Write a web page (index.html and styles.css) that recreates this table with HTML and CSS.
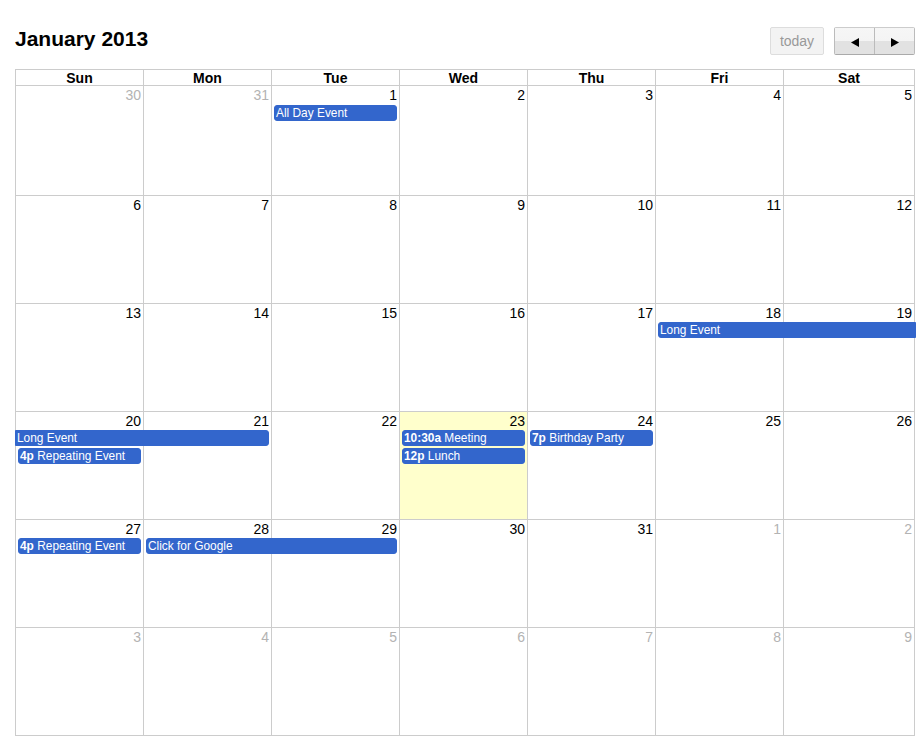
FILE: index.html
```html
<!DOCTYPE html>
<html>
<head>
<meta charset="utf-8">
<title>January 2013</title>
<link rel="stylesheet" href="styles.css">
</head>
<body>
<div class="page">
  <div class="toolbar">
    <h2 class="title">January 2013</h2>
    <div class="buttons">
      <button class="btn btn-today">today</button>
      <div class="btn-group">
        <button class="btn btn-nav"><svg class="tri" width="8" height="9" viewBox="0 0 8 9"><polygon points="8,0 8,9 0,4.5" fill="#000"/></svg></button>
        <button class="btn btn-nav btn-next"><svg class="tri" width="8" height="9" viewBox="0 0 8 9"><polygon points="0,0 0,9 8,4.5" fill="#000"/></svg></button>
      </div>
    </div>
  </div>

  <div class="calendar">
    <div class="dow-row">
      <div class="dow">Sun</div>
      <div class="dow">Mon</div>
      <div class="dow">Tue</div>
      <div class="dow">Wed</div>
      <div class="dow">Thu</div>
      <div class="dow">Fri</div>
      <div class="dow">Sat</div>
    </div>

    <div class="week week-first">
      <div class="cell other"><div class="num">30</div></div>
      <div class="cell other"><div class="num">31</div></div>
      <div class="cell"><div class="num">1</div></div>
      <div class="cell"><div class="num">2</div></div>
      <div class="cell"><div class="num">3</div></div>
      <div class="cell"><div class="num">4</div></div>
      <div class="cell"><div class="num">5</div></div>
      <div class="event col-3 row-2">All Day Event</div>
    </div>

    <div class="week">
      <div class="cell"><div class="num">6</div></div>
      <div class="cell"><div class="num">7</div></div>
      <div class="cell"><div class="num">8</div></div>
      <div class="cell"><div class="num">9</div></div>
      <div class="cell"><div class="num">10</div></div>
      <div class="cell"><div class="num">11</div></div>
      <div class="cell"><div class="num">12</div></div>
    </div>

    <div class="week">
      <div class="cell"><div class="num">13</div></div>
      <div class="cell"><div class="num">14</div></div>
      <div class="cell"><div class="num">15</div></div>
      <div class="cell"><div class="num">16</div></div>
      <div class="cell"><div class="num">17</div></div>
      <div class="cell"><div class="num">18</div></div>
      <div class="cell"><div class="num">19</div></div>
      <div class="event col-6-7 row-2 cont-right">Long Event</div>
    </div>

    <div class="week">
      <div class="cell"><div class="num">20</div></div>
      <div class="cell"><div class="num">21</div></div>
      <div class="cell"><div class="num">22</div></div>
      <div class="cell today"><div class="num">23</div></div>
      <div class="cell"><div class="num">24</div></div>
      <div class="cell"><div class="num">25</div></div>
      <div class="cell"><div class="num">26</div></div>
      <div class="event col-1-2 row-2 cont-left">Long Event</div>
      <div class="event col-4 row-2"><b>10:30a</b> Meeting</div>
      <div class="event col-5 row-2"><b>7p</b> Birthday Party</div>
      <div class="event col-1 row-3"><b>4p</b> Repeating Event</div>
      <div class="event col-4 row-3"><b>12p</b> Lunch</div>
    </div>

    <div class="week">
      <div class="cell"><div class="num">27</div></div>
      <div class="cell"><div class="num">28</div></div>
      <div class="cell"><div class="num">29</div></div>
      <div class="cell"><div class="num">30</div></div>
      <div class="cell"><div class="num">31</div></div>
      <div class="cell other"><div class="num">1</div></div>
      <div class="cell other"><div class="num">2</div></div>
      <div class="event col-1 row-2"><b>4p</b> Repeating Event</div>
      <div class="event col-2-3 row-2">Click for Google</div>
    </div>

    <div class="week">
      <div class="cell other"><div class="num">3</div></div>
      <div class="cell other"><div class="num">4</div></div>
      <div class="cell other"><div class="num">5</div></div>
      <div class="cell other"><div class="num">6</div></div>
      <div class="cell other"><div class="num">7</div></div>
      <div class="cell other"><div class="num">8</div></div>
      <div class="cell other"><div class="num">9</div></div>
    </div>
  </div>
</div>
</body>
</html>
```

FILE: styles.css
```css
* { box-sizing: border-box; }

html, body {
  margin: 0;
  padding: 0;
  background: #fff;
}

body {
  font-family: "Liberation Sans", Arial, sans-serif;
  font-size: 14px;
  color: #000;
}

.page {
  padding: 27px 0 0 15px;
  width: 915px;
}

.toolbar {
  display: flex;
  justify-content: space-between;
  align-items: flex-start;
  height: 28px;
  margin-bottom: 14px;
  width: 900px;
}

.title {
  margin: 0;
  font-size: 21px;
  font-weight: bold;
  line-height: 24px;
  white-space: nowrap;
}

.buttons {
  display: flex;
  gap: 10px;
}

.btn {
  font-family: "Liberation Sans", Arial, sans-serif;
  font-size: 14px;
  height: 28px;
  line-height: 26px;
  margin: 0;
  padding: 0 8px;
  border: 1px solid #ccc;
  border-radius: 2px;
  background: #f3f3f3;
  color: #000;
  cursor: default;
}

.btn-today {
  color: #999;
  border-color: #ddd;
  background: #f3f3f3;
  width: 54px;
  padding: 0;
  text-align: center;
}

.btn-group {
  display: flex;
  border: 1px solid;
  border-color: #ccc #bbb #aaa;
  border-radius: 2px;
}

.btn-nav {
  width: 39px;
  border: 0;
  border-radius: 0;
  height: 26px;
  padding: 2px 0 0 0;
  display: flex;
  align-items: center;
  justify-content: center;
  background: linear-gradient(to bottom, #f6f6f6 0, #f4f4f4 50%, #e2e2e2 50%, #e2e2e2 100%);
}

.btn-next {
  width: 40px;
  border-left: 1px solid #bbb;
}

.tri { display: block; }

/* calendar grid */
.calendar {
  width: 900px;
  border-top: 1px solid #ccc;
  border-right: 1px solid #ccc;
}

.dow-row,
.week {
  display: grid;
  grid-template-columns: repeat(6, 128px) 1fr;
}

.dow {
  height: 16px;
  padding-top: 1px;
  line-height: 14px;
  font-weight: bold;
  text-align: center;
  border-left: 1px solid #ccc;
  border-bottom: 1px solid #ccc;
}

.week {
  height: 108px;
  grid-template-rows: 18px 18px 18px 1fr;
}

.week-first {
  height: 110px;
  grid-template-rows: 19px 18px 18px 1fr;
}

.cell {
  grid-row: 1 / -1;
  border-left: 1px solid #ccc;
  border-bottom: 1px solid #ccc;
}

.cell:nth-child(1) { grid-column: 1; }
.cell:nth-child(2) { grid-column: 2; }
.cell:nth-child(3) { grid-column: 3; }
.cell:nth-child(4) { grid-column: 4; }
.cell:nth-child(5) { grid-column: 5; }
.cell:nth-child(6) { grid-column: 6; }
.cell:nth-child(7) { grid-column: 7; }

.cell.today { background: #ffffcc; }

.num {
  text-align: right;
  padding: 1px 2px 0;
  line-height: 16px;
  font-size: 14px;
}

.other .num { color: #b3b3b3; }

/* events */
.event {
  align-self: start;
  height: 16px;
  margin: 0 2px 0 3px;
  padding: 0 1px;
  background: #3366cc;
  border: 1px solid #3366cc;
  border-radius: 3px;
  color: #fff;
  font-size: 11.9px;
  line-height: 14px;
  white-space: nowrap;
  overflow: hidden;
}

.event b { font-weight: bold; }

.row-2 { grid-row: 2; }
.row-3 { grid-row: 3; }

.col-1 { grid-column: 1; }
.col-3 { grid-column: 3; }
.col-4 { grid-column: 4; }
.col-5 { grid-column: 5; }
.col-1-2 { grid-column: 1 / 3; }
.col-2-3 { grid-column: 2 / 4; }
.col-6-7 { grid-column: 6 / 8; }

.cont-right {
  margin-right: -2px;
  border-top-right-radius: 0;
  border-bottom-right-radius: 0;
}

.cont-left {
  margin-left: 0;
  border-top-left-radius: 0;
  border-bottom-left-radius: 0;
}
```
